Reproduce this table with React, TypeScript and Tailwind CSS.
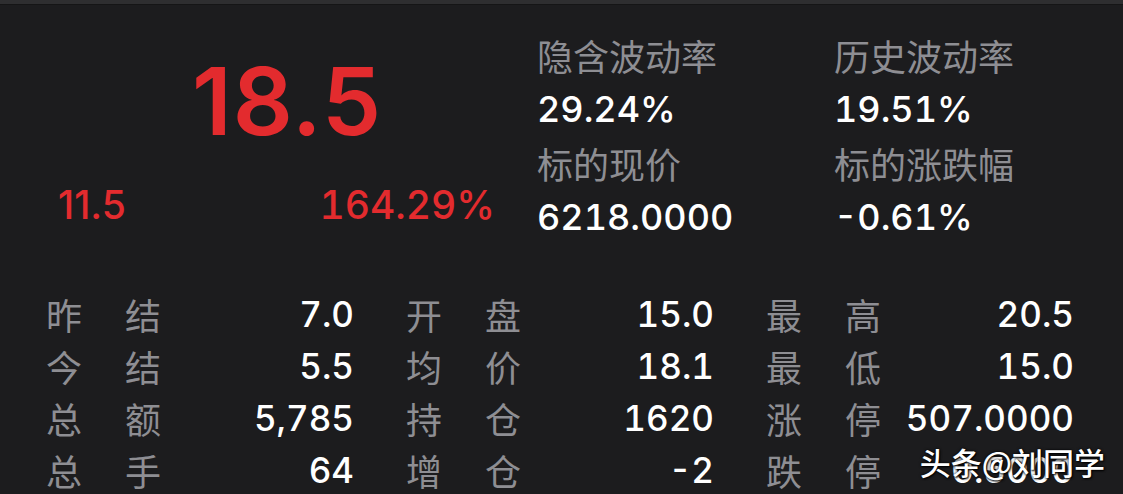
const LATIN = "font-['Inter','Noto_Sans_CJK_SC',sans-serif]";

const quotes = [
  [
    { label: '隐含波动率', value: '29.24%' },
    { label: '标的现价', value: '6218.0000' },
  ],
  [
    { label: '历史波动率', value: '19.51%' },
    { label: '标的涨跌幅', value: '-0.61%' },
  ],
];

const rows = [
  [['昨', '结', '7.0'], ['开', '盘', '15.0'], ['最', '高', '20.5']],
  [['今', '结', '5.5'], ['均', '价', '18.1'], ['最', '低', '15.0']],
  [['总', '额', '5,785'], ['持', '仓', '1620'], ['涨', '停', '507.0000']],
  [['总', '手', '64'], ['增', '仓', '-2'], ['跌', '停', '0.5000']],
];

function Cell({ a, b, value }: { a: string; b: string; value: string }) {
  return (
    <div className="flex items-center">
      <div className="flex w-[115px] justify-between text-[36px] text-[#8e8e93] font-['Noto_Sans_CJK_SC',sans-serif]">
        <span>{a}</span>
        <span>{b}</span>
      </div>
      <div className="w-[193px] text-right text-[35px] font-medium tabular-nums text-white">{value}</div>
    </div>
  );
}

export default function App() {
  return (
    <div className={`relative h-[494px] w-[1123px] overflow-hidden bg-[#1c1c1e] ${LATIN}`}>
      <div className="h-[4px] bg-[#2e2e30]" />
      <div className="h-px bg-[#151516]" />

      <div className="flex">
        <div className="w-[520px] pt-[40px]">
          <div className="pl-[54px] text-center text-[94px] leading-[112px] font-semibold tracking-[1px] text-[#e32b2e]">
            18.5
          </div>
          <div className="mt-[26px] flex justify-between pl-[58px] pr-[25px] text-[39px] leading-[44px] font-medium text-[#e32b2e]">
            <span>11.5</span>
            <span className="tabular-nums">164.29%</span>
          </div>
        </div>

        <div className="flex gap-[117px] pl-[17px] pt-[24px]">
          {quotes.map((col, i) => (
            <div key={i} className="w-[180px]">
              {col.map((q) => (
                <div key={q.label}>
                  <div className="text-[36px] leading-[52px] text-[#8e8e93] font-['Noto_Sans_CJK_SC',sans-serif]">
                    {q.label}
                  </div>
                  <div className="text-[36px] leading-[56px] font-medium tabular-nums text-white whitespace-nowrap">
                    {q.value}
                  </div>
                </div>
              ))}
            </div>
          ))}
        </div>
      </div>

      <div className="mt-[43px] flex flex-col pl-[46px]">
        {rows.map((row, i) => (
          <div key={i} className="flex h-[52px] gap-[52px]">
            {row.map(([a, b, v]) => (
              <Cell key={a + b} a={a} b={b} value={v} />
            ))}
          </div>
        ))}
      </div>

      <div className="absolute right-[18px] bottom-[12px] text-[31px] leading-[40px] font-medium text-white font-['Noto_Sans_CJK_SC',sans-serif] [text-shadow:0_0_3px_#000,1px_1px_2px_#000]">
        头条@刘同学
      </div>
    </div>
  );
}
